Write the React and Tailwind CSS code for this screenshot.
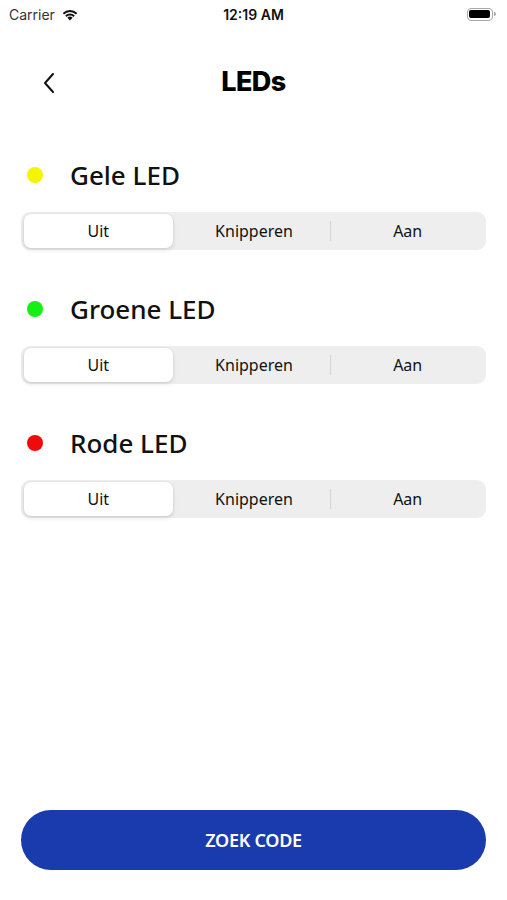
import React, { useState } from 'react';

// LED rows configuration
const leds = [
  { name: 'Gele LED', color: 'bg-[#f5f500]' },
  { name: 'Groene LED', color: 'bg-[#14f014]' },
  { name: 'Rode LED', color: 'bg-[#f00a0a]' },
];

const options = ['Uit', 'Knipperen', 'Aan'];

const StatusBar = () => (
  <div className="flex items-center justify-between h-[28px] px-[9px] font-['Inter',sans-serif] text-[14px] text-[#111]">
    <div className="flex items-center gap-[6px] w-[120px]">
      <span className="text-[#333]">Carrier</span>
      <svg width="18" height="13" viewBox="0 0 16 12">
        <path d="M8 11.5 L5.6 9 A3.4 3.4 0 0 1 10.4 9 Z" fill="#111" />
        <path d="M3.6 7 A6.2 6.2 0 0 1 12.4 7 L11.2 8.2 A4.5 4.5 0 0 0 4.8 8.2 Z" fill="#111" />
        <path d="M1.3 4.7 A9.4 9.4 0 0 1 14.7 4.7 L13.5 5.9 A7.7 7.7 0 0 0 2.5 5.9 Z" fill="#111" />
      </svg>
    </div>
    <span className="font-semibold">12:19 AM</span>
    <div className="flex items-center justify-end w-[120px] pr-[2px]">
      <div className="flex items-center">
        <div className="w-[26px] h-[13px] rounded-[4px] border border-[#a8a8a8] p-[1.5px]">
          <div className="w-full h-full rounded-[2px] bg-black" />
        </div>
        <div className="w-[2px] h-[4px] rounded-r-sm bg-[#a8a8a8] ml-[1px]" />
      </div>
    </div>
  </div>
);

const Segmented = ({ value, onChange }) => (
  <div className="flex items-center h-[38px] mt-[1px] rounded-[9px] bg-[#eeeeef] p-[2px]">
    {options.map((opt, i) => {
      const active = value === i;
      const showDivider = i > 0 && value !== i && value !== i - 1;
      return (
        <div key={opt} className="flex flex-1 h-full items-center">
          <div className={`w-px h-[20px] ${showDivider ? 'bg-[#d4d4d6]' : 'bg-transparent'}`} />
          <button
            onClick={() => onChange(i)}
            className={`flex-1 h-full rounded-[7px] text-[16px] text-[#111] ${
              active ? 'bg-white mr-[4px] shadow-[0_2px_4px_rgba(0,0,0,0.12),0_0_0_0.5px_rgba(0,0,0,0.06)]' : ''
            }`}
          >
            {opt}
          </button>
        </div>
      );
    })}
  </div>
);

export default function App() {
  const [values, setValues] = useState([0, 0, 0]);

  const setValue = (idx, v) => {
    const next = [...values];
    next[idx] = v;
    setValues(next);
  };

  return (
    <div className="w-[507px] h-[900px] bg-white flex flex-col font-['Noto_Sans',sans-serif]">
      <StatusBar />

      <div className="relative flex items-center justify-center h-[52px] mt-[28px]">
        <button className="absolute left-[38px] top-[12px] p-[4px]">
          <svg width="14" height="22" viewBox="0 0 14 22" fill="none">
            <path d="M11 2 L3 11 L11 20" stroke="#111" strokeWidth="2" strokeLinecap="round" strokeLinejoin="round" />
          </svg>
        </button>
        <h1 className="font-['Inter',sans-serif] text-[27px] font-extrabold tracking-[-0.5px] text-black">LEDs</h1>
      </div>

      <div className="flex flex-col gap-[41px] px-[21px] mt-[49px]">
        {leds.map((led, idx) => (
          <div key={led.name} className="flex flex-col gap-[18px]">
            <div className="flex items-center h-[36px]">
              <div className={`w-[16px] h-[16px] rounded-full ${led.color} ml-[6px]`} />
              <span className="ml-[27px] text-[26px] font-medium text-[#111]">{led.name}</span>
            </div>
            <Segmented value={values[idx]} onChange={(v) => setValue(idx, v)} />
          </div>
        ))}
      </div>

      <div className="flex-1" />

      <div className="px-[21px] pb-[30px]">
        <button className="w-full h-[60px] rounded-full bg-[#1a3bad] text-white text-[18px] font-semibold tracking-[-0.3px]">
          ZOEK CODE
        </button>
      </div>
    </div>
  );
}
